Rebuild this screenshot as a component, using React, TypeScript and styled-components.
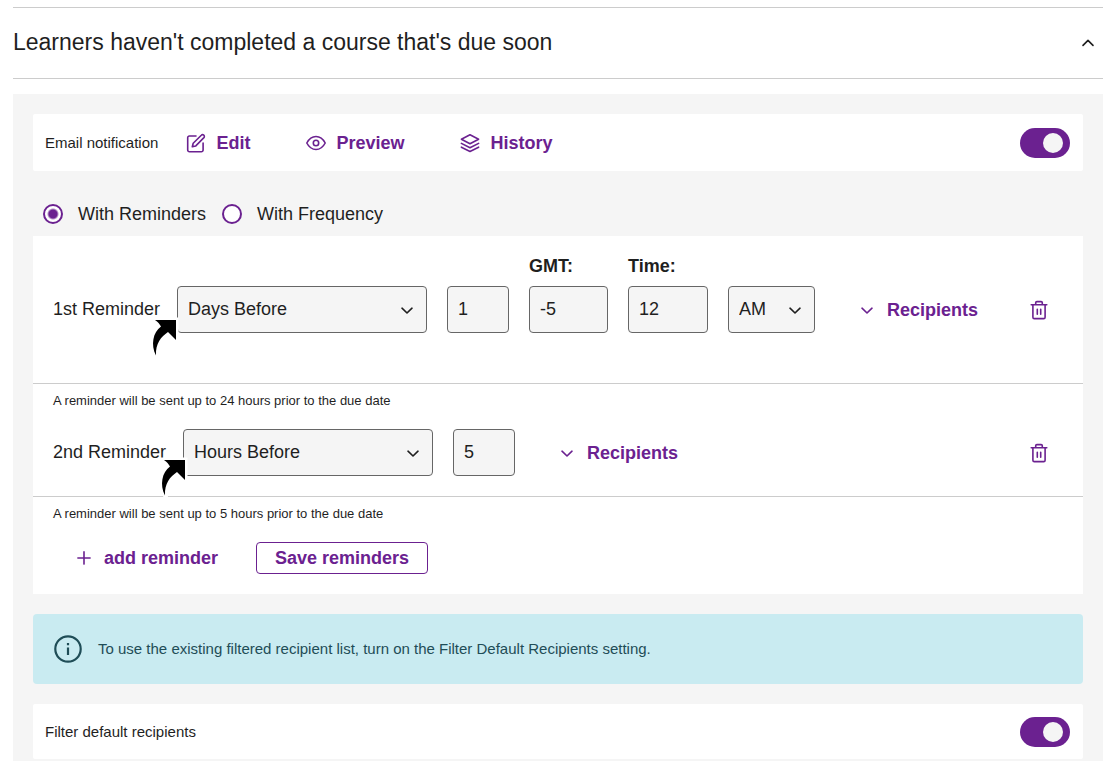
import React, { useId, useState } from 'react';
import styled, { createGlobalStyle } from 'styled-components';

const purple = '#6b2190';
const ink = '#1f1f1f';
const teal = '#1f4d57';

const GlobalStyle = createGlobalStyle`
  *, *::before, *::after { box-sizing: border-box; }
  body {
    margin: 0;
    background: #fff;
    color: ${ink};
    font-family: "Liberation Sans", Arial, sans-serif;
    font-size: 18px;
    line-height: 20px;
  }
  button, input, select { font: inherit; color: inherit; margin: 0; }
`;

const Page = styled.main`
  padding: 7px 8px 0 13px;
`;

const SectionHeader = styled.header`
  display: flex;
  align-items: center;
  justify-content: space-between;
  height: 72px;
  padding-right: 8px;
  border-top: 1px solid #ccc;
  border-bottom: 1px solid #ccc;
`;

const Title = styled.h2`
  margin: 0;
  padding-bottom: 2px;
  font-size: 23px;
  font-weight: 400;
  line-height: 28px;
`;

const IconButton = styled.button`
  display: flex;
  padding: 0;
  border: 0;
  background: none;
  color: inherit;
  cursor: pointer;
`;

const DeleteButton = styled(IconButton)`
  margin-left: auto;
  height: 46px;
  align-items: center;
  color: ${purple};
`;

const Panel = styled.section`
  margin-top: 15px;
  padding: 20px;
  background: #f5f5f5;
`;

const SettingCard = styled.div<{ $height: number }>`
  display: flex;
  align-items: center;
  height: ${(p) => p.$height}px;
  padding: 0 13px 0 12px;
  border-radius: 2px;
  background: #fff;
`;

const SettingName = styled.label`
  font-size: 15px;
`;

const Actions = styled.div`
  display: flex;
  gap: 56px;
  margin-left: 28px;
`;

const TextButton = styled.button<{ $gap?: number }>`
  display: flex;
  align-items: center;
  gap: ${(p) => p.$gap ?? 10}px;
  padding: 0;
  border: 0;
  background: none;
  color: ${purple};
  font-weight: 700;
  cursor: pointer;
`;

const Switch = styled.input`
  appearance: none;
  display: flex;
  align-items: center;
  width: 50px;
  height: 30px;
  margin-left: auto;
  padding: 0 7px;
  border-radius: 15px;
  background: #8a8a8a;
  cursor: pointer;

  &::before {
    content: '';
    width: 20px;
    height: 20px;
    border-radius: 50%;
    background: #f5f5f5;
  }
  &:checked {
    justify-content: flex-end;
    background: ${purple};
  }
`;

const ModeGroup = styled.div`
  display: flex;
  gap: 16px;
  padding: 32px 0 12px 10px;
`;

const ModeLabel = styled.label`
  display: flex;
  align-items: center;
  gap: 15px;
  height: 21px;
`;

const Radio = styled.input`
  appearance: none;
  width: 20px;
  height: 20px;
  border: 2px solid ${purple};
  border-radius: 50%;
  background: #fff;

  &:checked {
    background: radial-gradient(circle, ${purple} 4px, #fff 6px);
  }
`;

const Reminders = styled.div`
  padding-bottom: 20px;
  background: #fff;
`;

const ReminderRow = styled.div<{ $after: number }>`
  display: flex;
  align-items: flex-end;
  gap: 20px;
  padding: 20px 34px ${(p) => p.$after}px 20px;
  border-bottom: 1px solid #ccc;
`;

const RowName = styled.label<{ $width: number }>`
  flex: none;
  width: ${(p) => p.$width}px;
  height: 47px;
  line-height: 46px;
  white-space: nowrap;
`;

const Field = styled.div`
  display: flex;
  flex-direction: column;
  gap: 10px;
`;

const FieldName = styled.label`
  font-weight: 700;
`;

const TextInput = styled.input<{ $width: number }>`
  width: ${(p) => p.$width}px;
  height: 47px;
  padding: 0 10px;
  border: 1px solid #666;
  border-radius: 4px;
  background: #f5f5f5;
`;

const SelectBox = styled.div`
  position: relative;
  display: flex;
`;

const SelectMark = styled.span`
  position: absolute;
  top: 16px;
  right: 13px;
  display: flex;
  pointer-events: none;
`;

const Select = styled.select<{ $width: number }>`
  appearance: none;
  width: ${(p) => p.$width}px;
  height: 47px;
  padding: 0 10px 2px;
  border: 1px solid #666;
  border-radius: 4px;
  background: #f5f5f5;
`;

const Pointer = styled.svg<{ $left: number; $top: number }>`
  position: absolute;
  left: ${(p) => p.$left}px;
  top: ${(p) => p.$top}px;
  pointer-events: none;
`;

const RecipientsSlot = styled.div`
  display: flex;
  align-items: center;
  height: 47px;
  padding-left: 25px;
`;

const Note = styled.p`
  margin: 0;
  padding: 9px 20px 0;
  font-size: 13px;
  line-height: 16px;
`;

const Footer = styled.div`
  display: flex;
  align-items: center;
  gap: 38px;
  padding: 20px 43px 0;
`;

const OutlineButton = styled.button`
  height: 32px;
  padding: 0 18px;
  border: 1px solid ${purple};
  border-radius: 4px;
  background: #fff;
  color: ${purple};
  font-weight: 700;
  cursor: pointer;
`;

const Notice = styled.div`
  display: flex;
  align-items: center;
  gap: 16px;
  height: 70px;
  margin: 20px 0;
  padding: 0 21px;
  border-radius: 4px;
  background: #c9ebf1;
  color: ${teal};
  font-size: 15px;
`;

const stroke = {
  fill: 'none',
  stroke: 'currentColor',
  strokeWidth: 1.6,
  strokeLinecap: 'round',
  strokeLinejoin: 'round',
} as const;

const Chevron = ({ up = false }: { up?: boolean }) => (
  <svg width="14" height="16" viewBox="0 0 14 16" {...stroke} aria-hidden="true">
    <path d={up ? 'M2 10.400 7 5.400l5 5' : 'M2 6.200 7 11l5-4.800'} />
  </svg>
);

const EditIcon = () => (
  <svg width="20" height="20" viewBox="0 0 20 20" {...stroke} aria-hidden="true">
    <path d="M10 3H3.400A1.700 1.700 0 0 0 1.700 4.700V17a1.700 1.700 0 0 0 1.700 1.700h12A1.700 1.700 0 0 0 17.100 17v-7" />
    <path d="M15.300 2.300a1.650 1.650 0 0 1 2.600 2.300L9.800 12.900l-3.500.900.900-3.500Z" />
  </svg>
);

const EyeIcon = () => (
  <svg width="20" height="20" viewBox="0 0 20 20" {...stroke} aria-hidden="true">
    <path d="M.8 10C3 5.800 6.200 3.500 10 3.500s7 2.300 9.200 6.500c-2.200 4.200-5.400 6.500-9.200 6.500S3 14.200.8 10Z" />
    <circle cx="10" cy="10" r="2.700" />
  </svg>
);

const LayersIcon = () => (
  <svg width="20" height="20" viewBox="0 0 20 20" {...stroke} aria-hidden="true">
    <path d="M10 1.700 18.600 6.200 10 10.700 1.400 6.200Z" />
    <path d="m1.400 10.400 8.600 4.300 8.600-4.300" />
    <path d="m1.400 14.200 8.600 4.300 8.600-4.300" />
  </svg>
);

const TrashIcon = () => (
  <svg width="20" height="20" viewBox="0 0 20 20" {...stroke} aria-hidden="true">
    <path d="M2.200 4.800h15.600M6.700 4.500V2.800c0-.7.500-1.200 1.200-1.200h4.200c.7 0 1.200.5 1.200 1.200v1.700" />
    <path d="M3.900 5v12.200c0 .8.600 1.400 1.400 1.400h9.400c.8 0 1.400-.6 1.400-1.400V5M8.300 9.200v5M11.700 9.200v5" />
  </svg>
);

const PlusIcon = () => (
  <svg width="16" height="16" viewBox="0 0 16 16" {...stroke} aria-hidden="true">
    <path d="M8 1.900v12.200M1.900 8h12.200" />
  </svg>
);

const InfoIcon = () => (
  <svg width="28" height="28" viewBox="0 0 28 28" fill="none" stroke="currentColor" strokeWidth="2.200" aria-hidden="true">
    <circle cx="14" cy="14" r="12.700" />
    <path d="M14 12.500v7.500M14 8v2.300" />
  </svg>
);

const CurvedArrow = ({ left, top }: { left: number; top: number }) => (
  <Pointer $left={left} $top={top} width="32" height="44" viewBox="0 0 32 44" aria-hidden="true">
    <path
      d="M6 3h21v20l-8-8C13 20 8.500 27 7.500 38.500 1.500 28 4 15 12 9.500 10.500 7 9 5 6 3Z"
      fill="#fff"
      stroke="#fff"
      strokeWidth="5"
    />
    <path d="M6 3h21v20l-8-8C12 20 6.500 26 7 38.500 1.500 28 4 15 12 9.500 10.500 7 9 5 6 3Z" fill="#000" />
  </Pointer>
);

type DropdownProps = {
  id?: string;
  width: number;
  label?: string;
  options: string[];
  arrow?: { left: number; top: number };
};

const Dropdown = ({ id, width, label, options, arrow }: DropdownProps) => (
  <SelectBox>
    <Select id={id} $width={width} aria-label={label} defaultValue={options[0]}>
      {options.map((o) => (
        <option key={o}>{o}</option>
      ))}
    </Select>
    <SelectMark><Chevron /></SelectMark>
    {arrow && <CurvedArrow {...arrow} />}
  </SelectBox>
);

const LabelledInput = ({ name, value, width }: { name: string; value: string; width: number }) => {
  const id = useId();
  return (
    <Field>
      <FieldName htmlFor={id}>{name}</FieldName>
      <TextInput id={id} $width={width} defaultValue={value} />
    </Field>
  );
};

const Recipients = () => (
  <RecipientsSlot>
    <TextButton type="button" $gap={13}>
      <Chevron />
      Recipients
    </TextButton>
  </RecipientsSlot>
);

const Delete = ({ label }: { label: string }) => (
  <DeleteButton type="button" aria-label={label}>
    <TrashIcon />
  </DeleteButton>
);

export default function App() {
  const [mode, setMode] = useState('reminders');
  return (
    <>
      <GlobalStyle />
      <Page>
        <SectionHeader>
          <Title>Learners haven't completed a course that's due soon</Title>
          <IconButton type="button" aria-label="Collapse section" aria-expanded="true">
            <Chevron up />
          </IconButton>
        </SectionHeader>
        <Panel>
          <SettingCard $height={57}>
            <SettingName htmlFor="email">Email notification</SettingName>
            <Actions>
              <TextButton type="button"><EditIcon />Edit</TextButton>
              <TextButton type="button"><EyeIcon />Preview</TextButton>
              <TextButton type="button"><LayersIcon />History</TextButton>
            </Actions>
            <Switch id="email" type="checkbox" role="switch" defaultChecked />
          </SettingCard>

          <ModeGroup role="radiogroup" aria-label="Schedule">
            <ModeLabel>
              <Radio type="radio" name="mode" checked={mode === 'reminders'} onChange={() => setMode('reminders')} />
              With Reminders
            </ModeLabel>
            <ModeLabel>
              <Radio type="radio" name="mode" checked={mode === 'frequency'} onChange={() => setMode('frequency')} />
              With Frequency
            </ModeLabel>
          </ModeGroup>

          <Reminders>
            <ReminderRow $after={50}>
              <RowName htmlFor="first" $width={104}>1st Reminder</RowName>
              <Dropdown id="first" width={250} options={['Days Before', 'Hours Before']} arrow={{ left: -28, top: 31 }} />
              <TextInput $width={62} defaultValue="1" aria-label="Number of days" />
              <LabelledInput name="GMT:" value="-5" width={79} />
              <LabelledInput name="Time:" value="12" width={80} />
              <Dropdown label="AM or PM" width={87} options={['AM', 'PM']} />
              <Recipients />
              <Delete label="Delete 1st reminder" />
            </ReminderRow>
            <Note>A reminder will be sent up to 24 hours prior to the due date</Note>
            <ReminderRow $after={20}>
              <RowName htmlFor="second" $width={110}>2nd Reminder</RowName>
              <Dropdown id="second" width={250} options={['Hours Before', 'Days Before']} arrow={{ left: -25, top: 28 }} />
              <TextInput $width={62} defaultValue="5" aria-label="Number of hours" />
              <Recipients />
              <Delete label="Delete 2nd reminder" />
            </ReminderRow>
            <Note>A reminder will be sent up to 5 hours prior to the due date</Note>
            <Footer>
              <TextButton type="button" $gap={12}><PlusIcon />add reminder</TextButton>
              <OutlineButton type="button">Save reminders</OutlineButton>
            </Footer>
          </Reminders>

          <Notice>
            <InfoIcon />
            To use the existing filtered recipient list, turn on the Filter Default Recipients setting.
          </Notice>

          <SettingCard $height={55}>
            <SettingName htmlFor="filter">Filter default recipients</SettingName>
            <Switch id="filter" type="checkbox" role="switch" defaultChecked />
          </SettingCard>
        </Panel>
      </Page>
    </>
  );
}
